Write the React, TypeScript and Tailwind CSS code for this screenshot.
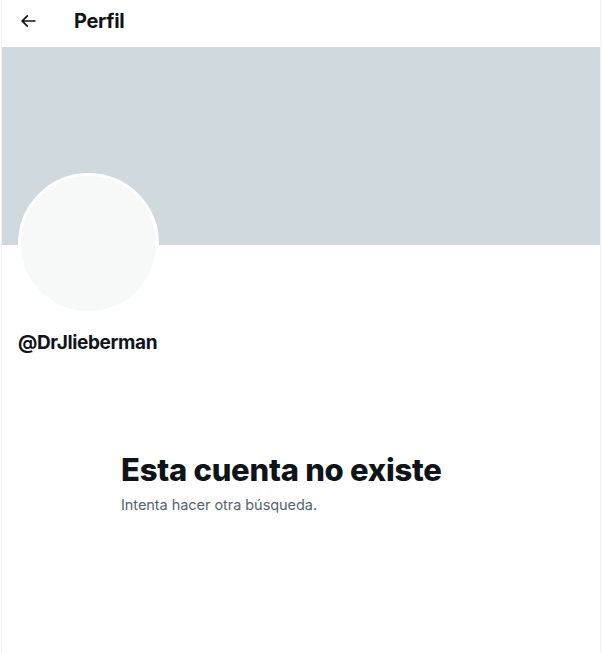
import React from 'react'

const BackArrow = () => (
  <svg viewBox="0 0 24 24" className="w-5 h-5 fill-[#0f1419]">
    <path d="M7.414 13l5.043 5.04-1.414 1.42L3.586 12l7.457-7.46 1.414 1.42L7.414 11H21v2H7.414z" />
  </svg>
)

const App = () => {
  return (
    <div className="min-h-screen w-full bg-white" style={{ fontFamily: 'Inter, "Liberation Sans", sans-serif' }}>
      <div className="ml-[1px] w-[600px] min-h-screen border-x border-[#eff3f4] text-[#0f1419]">
        {/* header */}
        <div className="h-[47px] flex items-center px-[16px] pb-[6px]">
          <div className="w-5 h-5">
            <BackArrow />
          </div>
          <div className="ml-[36px] text-[20px] font-bold tracking-[-0.3px] leading-none">Perfil</div>
        </div>

        {/* banner */}
        <div className="h-[198px] w-full bg-[#cfd9de]" />

        {/* avatar + name */}
        <div className="px-[16px]">
          <div className="-mt-[72px] w-[141px] h-[141px] rounded-full border-[3px] border-white bg-[#f7f9f9]" />
          <div className="mt-[17px] text-[19px] font-bold leading-6 tracking-[-0.35px]">@DrJlieberman</div>
        </div>

        {/* empty state */}
        <div className="mt-[97px] mx-auto w-[360px]">
          <div className="text-[31px] font-extrabold leading-9 tracking-[-0.25px]">Esta cuenta no existe</div>
          <div className="mt-[7px] text-[14.5px] leading-5 text-[#536471] tracking-[-0.05px]">Intenta hacer otra búsqueda.</div>
        </div>
      </div>
    </div>
  )
}

export default App
